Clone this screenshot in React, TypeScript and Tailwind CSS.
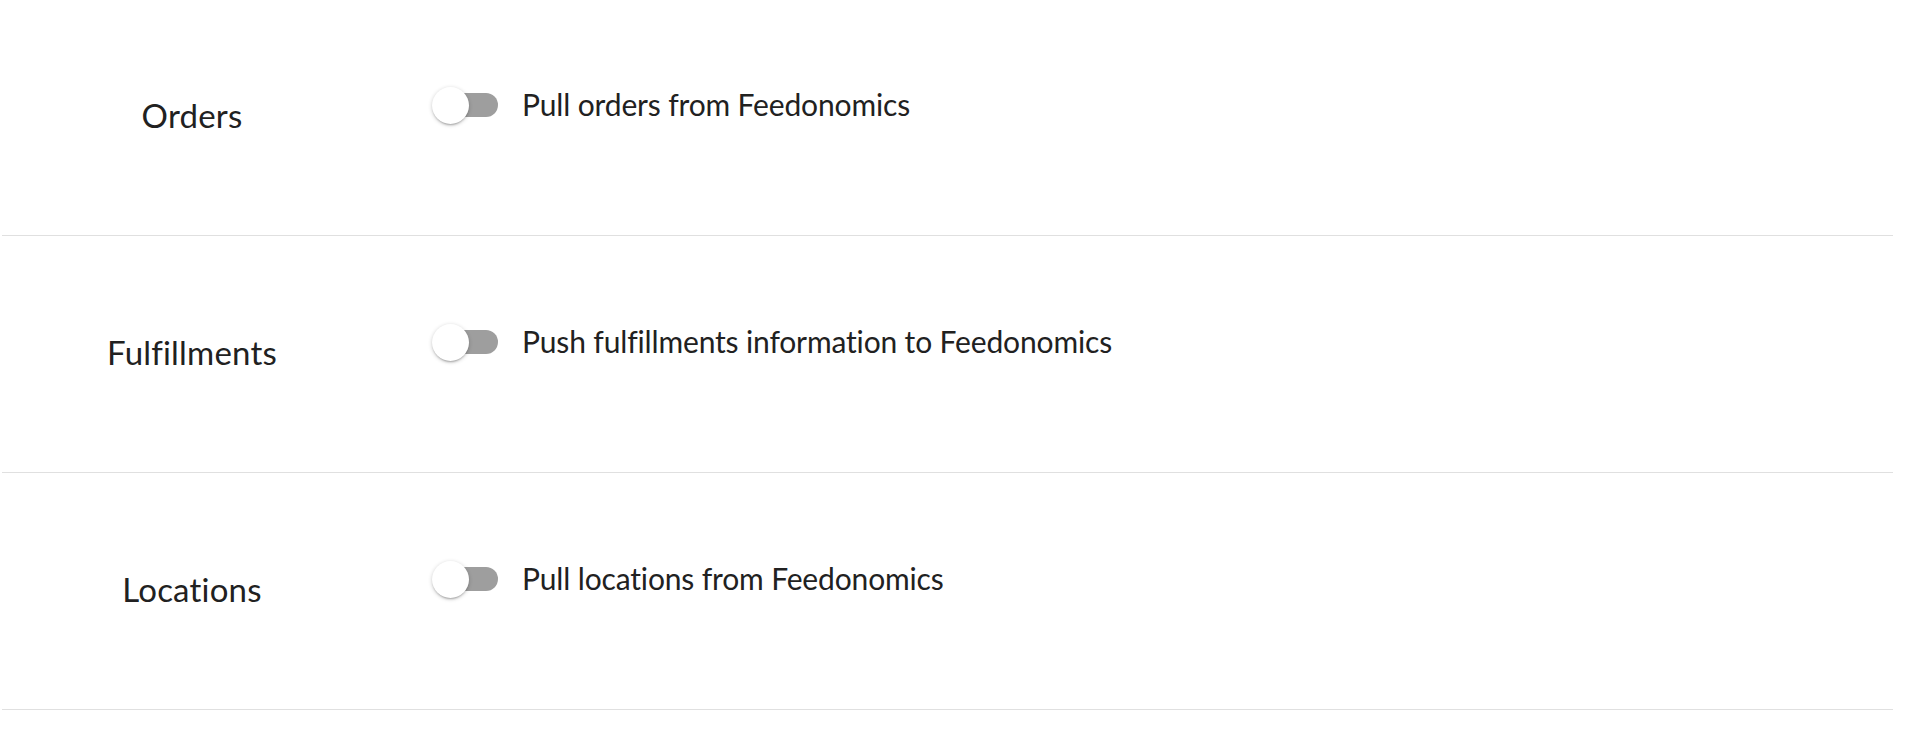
const rows = [
  { label: "Orders", text: "Pull orders from Feedonomics" },
  { label: "Fulfillments", text: "Push fulfillments information to Feedonomics" },
  { label: "Locations", text: "Pull locations from Feedonomics" },
];

function Toggle() {
  return (
    <span className="relative inline-block h-[37px] w-[66px] shrink-0">
      <span className="absolute left-[5px] top-[6px] h-[24px] w-[61px] rounded-full bg-[#9e9e9e]" />
      <span className="absolute left-0 top-0 h-[37px] w-[37px] rounded-full bg-white shadow-[0_2px_2px_-1px_rgba(0,0,0,0.25),0_1px_4px_rgba(0,0,0,0.2)]" />
    </span>
  );
}

export default function App() {
  return (
    <div className="ml-[2px] w-[1891px] bg-white text-[#212121] [font-family:Lato,'Noto_Sans',sans-serif]">
      {rows.map((row, i) => (
        <div
          key={row.label}
          className={`flex h-[237px] items-center border-b border-[#e0e0e0] ${i === 0 ? "-mt-[1px]" : ""}`}
        >
          <div className="w-[380px] shrink-0 pb-[4px] text-center text-[33px] leading-none tracking-[0.2px]">{row.label}</div>
          <div className="flex items-center pb-[24px] pl-[50px]">
            <Toggle />
            <span className="mb-[2px] ml-[24px] text-[30px] leading-none tracking-[-0.15px]">{row.text}</span>
          </div>
        </div>
      ))}
    </div>
  );
}
